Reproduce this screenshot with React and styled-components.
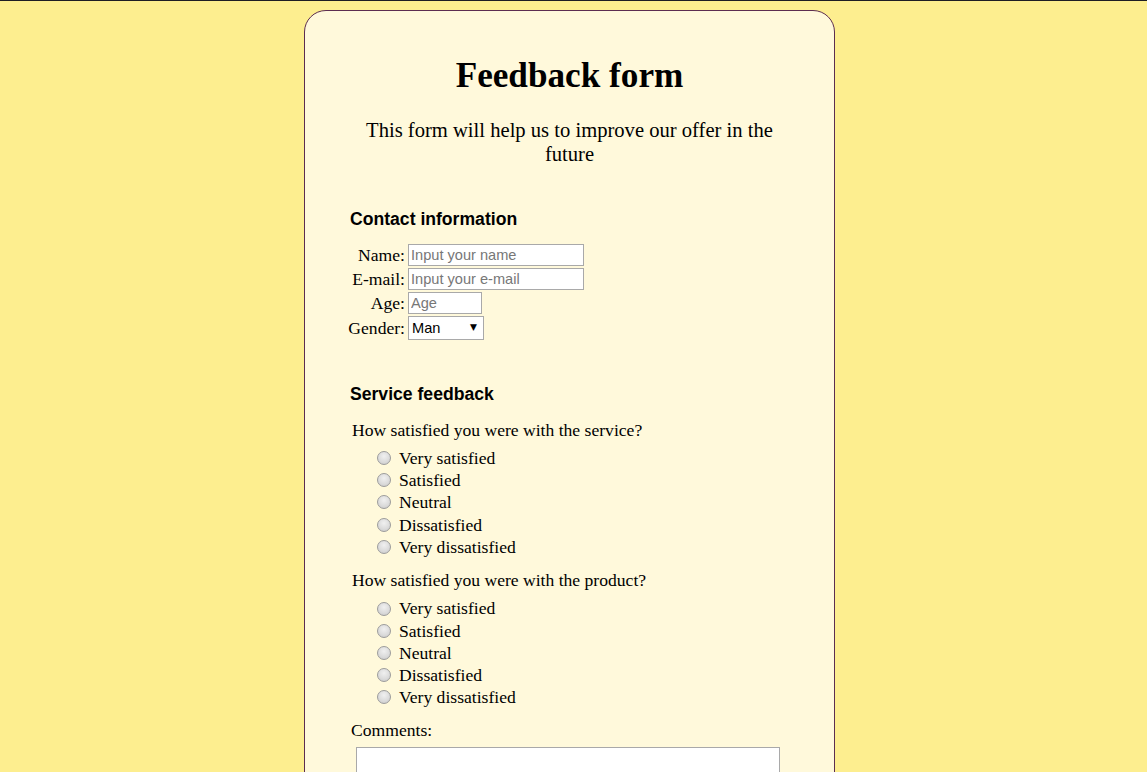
import React from "react";
import styled, { createGlobalStyle } from "styled-components";

const GlobalStyle = createGlobalStyle`
  html {
    border-top: 1px solid #1e1e24;
    background: #fdee8f;
  }
  body {
    margin: 8px;
    background: #fdee8f;
    font-family: "Liberation Serif", "Times New Roman", serif;
    font-size: 17.6px;
    color: #000;
  }
`;

const Card = styled.form`
  box-sizing: border-box;
  width: 531px;
  margin: 1px 0 40px 296px;
  padding: 45px 45px 40px;
  background: #fff9db;
  border: 1px solid #5c2d50;
  border-radius: 22px;
  display: flex;
  flex-direction: column;
`;

const Title = styled.h1`
  margin: 0;
  font-size: 35.2px;
  line-height: 40px;
  font-weight: bold;
  text-align: center;
`;

const Subtitle = styled.p`
  margin: 22px 0 0;
  font-size: 20.6px;
  line-height: 24px;
  text-align: center;
`;

const SectionTitle = styled.h4`
  margin: ${(p) => p.$top}px 0 0;
  font-family: "Liberation Sans", Arial, sans-serif;
  font-size: 17.6px;
  line-height: 20px;
  font-weight: bold;
`;

const ContactGrid = styled.div`
  margin-top: 15px;
  display: grid;
  grid-template-columns: 55px auto;
  column-gap: 3px;
  row-gap: 2px;
  align-items: center;
  justify-items: start;
`;

const FieldLabel = styled.label`
  justify-self: end;
  line-height: 20px;
`;

const TextInput = styled.input`
  box-sizing: border-box;
  width: ${(p) => p.$width}px;
  height: 22px;
  padding: 1px 2px;
  border: 1px solid #a9a9a9;
  background: #fff;
  font-family: "Liberation Sans", Arial, sans-serif;
  font-size: 14.6px;
  color: #000;
  outline: none;
  &::placeholder {
    color: #777;
  }
`;

const SelectWrap = styled.div`
  position: relative;
  width: 76px;
  height: 24px;
`;

const Select = styled.select`
  box-sizing: border-box;
  appearance: none;
  width: 76px;
  height: 24px;
  padding: 0 16px 0 3px;
  border: 1px solid #a9a9a9;
  border-radius: 0;
  background: #fff;
  font-family: "Liberation Sans", Arial, sans-serif;
  font-size: 14.6px;
  color: #000;
`;

const Arrow = styled.span`
  position: absolute;
  right: 7px;
  top: 6px;
  font-family: "DejaVu Sans", sans-serif;
  font-size: 9px;
  line-height: 10px;
  pointer-events: none;
`;

const Question = styled.p`
  margin: ${(p) => p.$top}px 0 0;
  padding-left: 2px;
  line-height: 20px;
`;

const Options = styled.div`
  margin-top: 7px;
  padding-left: 27px;
  display: flex;
  flex-direction: column;
`;

const Option = styled.label`
  display: flex;
  align-items: center;
  height: 22.2px;
  line-height: 22.2px;
  gap: 8px;
`;

const Radio = styled.input`
  appearance: none;
  box-sizing: border-box;
  width: 14px;
  height: 14px;
  margin: 0;
  border: 1px solid #9c9c9c;
  border-radius: 50%;
  background: radial-gradient(circle at 50% 35%, #f0f0f0 0%, #dcdcdc 55%, #c8c8c8 100%);
  &:checked {
    background: radial-gradient(circle, #333 0 3px, #eaeaea 4px);
  }
`;

const CommentsLabel = styled.label`
  margin-top: 12px;
  padding-left: 1px;
  line-height: 20px;
`;

const TextArea = styled.textarea`
  box-sizing: border-box;
  margin: 7px 0 0 6px;
  width: 424px;
  height: 110px;
  border: 1px solid #a9a9a9;
  background: #fff;
  resize: none;
`;

const SubmitButton = styled.button`
  align-self: center;
  margin-top: 20px;
  padding: 4px 16px;
  font-family: "Liberation Sans", Arial, sans-serif;
  font-size: 14.6px;
`;

const choices = [
  "Very satisfied",
  "Satisfied",
  "Neutral",
  "Dissatisfied",
  "Very dissatisfied",
];

function RadioGroup({ name }) {
  return (
    <Options>
      {choices.map((c) => (
        <Option key={c}>
          <Radio type="radio" name={name} value={c} />
          {c}
        </Option>
      ))}
    </Options>
  );
}

export default function App() {
  return (
    <>
      <GlobalStyle />
      <Card onSubmit={(e) => e.preventDefault()}>
        <Title>Feedback form</Title>
        <Subtitle>This form will help us to improve our offer in the future</Subtitle>

        <SectionTitle $top={43}>Contact information</SectionTitle>
        <ContactGrid>
          <FieldLabel htmlFor="name">Name:</FieldLabel>
          <TextInput id="name" $width={176} placeholder="Input your name" />
          <FieldLabel htmlFor="email">E-mail:</FieldLabel>
          <TextInput id="email" $width={176} placeholder="Input your e-mail" />
          <FieldLabel htmlFor="age">Age:</FieldLabel>
          <TextInput id="age" $width={74} placeholder="Age" />
          <FieldLabel htmlFor="gender">Gender:</FieldLabel>
          <SelectWrap>
            <Select id="gender" defaultValue="Man">
              <option>Man</option>
              <option>Woman</option>
            </Select>
            <Arrow>▼</Arrow>
          </SelectWrap>
        </ContactGrid>

        <SectionTitle $top={44}>Service feedback</SectionTitle>
        <Question $top={16}>How satisfied you were with the service?</Question>
        <RadioGroup name="service" />
        <Question $top={12.5}>How satisfied you were with the product?</Question>
        <RadioGroup name="product" />

        <CommentsLabel htmlFor="comments">Comments:</CommentsLabel>
        <TextArea id="comments" />
        <SubmitButton type="submit">Send</SubmitButton>
      </Card>
    </>
  );
}
